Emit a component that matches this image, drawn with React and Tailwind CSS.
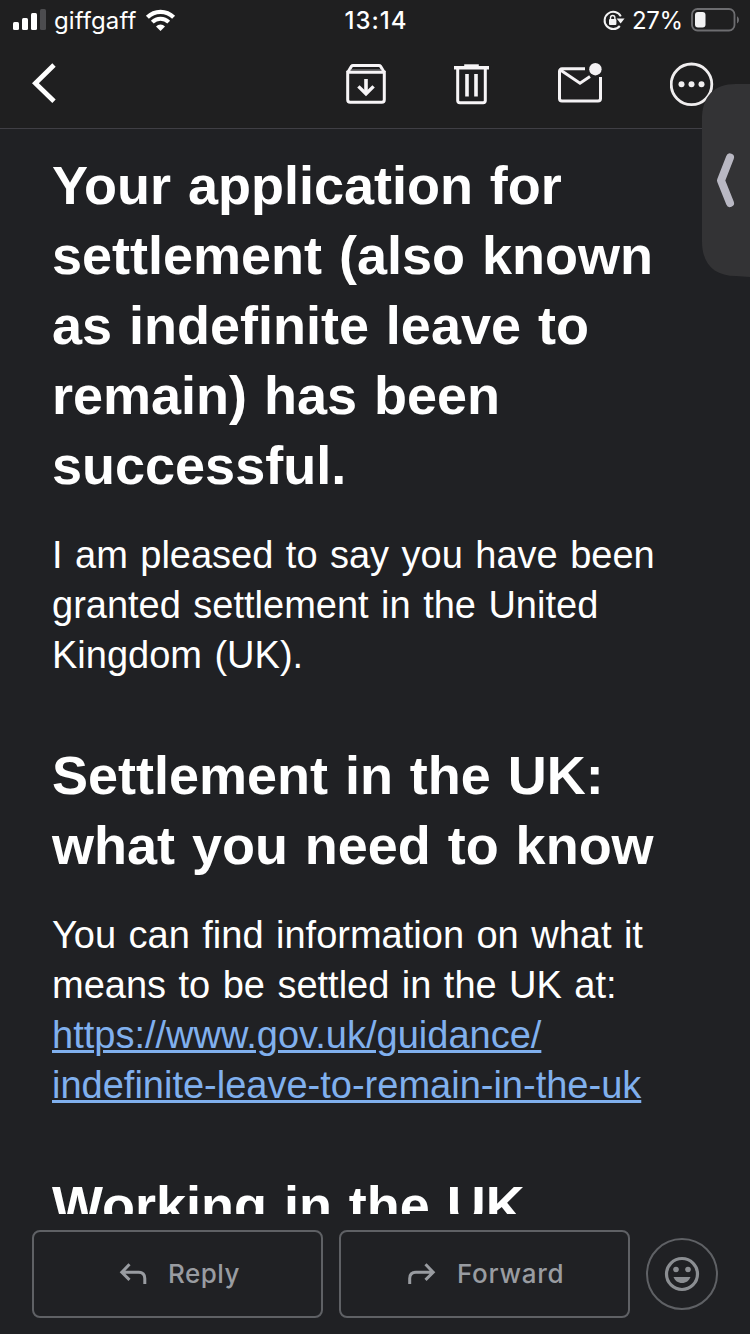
import React from 'react';

const StatusBar = () => (
  <div className="flex h-10 shrink-0 items-center text-[24px] leading-10 text-white">
    <div className="flex flex-1 items-center pl-[13px]">
      <svg width="34" height="22" viewBox="0 0 34 22" fill="#fff">
        <rect x="0" y="13" width="6" height="8" rx="1.5" />
        <rect x="9" y="9" width="6" height="12" rx="1.5" />
        <rect x="18" y="4" width="6" height="17" rx="1.5" />
        <rect x="27" y="0" width="6" height="21" rx="1.5" fill="#4c4c4f" />
      </svg>
      <span className="ml-[7px] w-[82px] whitespace-nowrap pt-0.5 leading-[38px] tracking-[0.1px]">giffgaff</span>
      <svg className="ml-[9px]" width="31" height="23" viewBox="0 0 31 23">
        <path d="M2.4 8.2a18.6 18.6 0 0 1 26.2 0" fill="none" stroke="#fff" strokeWidth="4.2" />
        <path d="M7.3 13.2a11.6 11.6 0 0 1 16.4 0" fill="none" stroke="#fff" strokeWidth="4" />
        <path d="M11 17.4a6.5 6.5 0 0 1 9 0L15.5 22z" fill="#fff" />
      </svg>
    </div>
    <span className="w-[64px] whitespace-nowrap pt-0.5 leading-[38px] font-medium tracking-[1px]">13:14</span>
    <div className="flex flex-1 items-center justify-end pr-[10px]">
      <svg width="22" height="21" viewBox="0 0 22 21" fill="none">
        <path d="M17.8 6.4A8.6 8.6 0 1 0 16.8 16" stroke="#f4f4f5" strokeWidth="2" />
        <path d="M13.6 8.4h8L17.6 13.4z" fill="#f4f4f5" />
        <rect x="6" y="9" width="7.4" height="6" rx="1" fill="#f4f4f5" />
        <path d="M7.5 9.5V7.7a2.2 2.2 0 0 1 4.4 0v1.8" stroke="#f4f4f5" strokeWidth="1.4" />
      </svg>
      <span className="ml-[7px] w-[51px] whitespace-nowrap pt-0.5 leading-[38px] tracking-[-0.3px]">27%</span>
      <svg className="ml-[8px]" width="49" height="24" viewBox="0 0 49 24">
        <rect x="1" y="1" width="42.5" height="21.5" rx="5.5" fill="none" stroke="#6d6d70" strokeWidth="1.8" />
        <rect x="4" y="4" width="10.5" height="15.5" rx="3" fill="#f2f2f3" />
        <path d="M46 8.2c2.6 1.4 2.6 5.8 0 7.2z" fill="#6d6d70" />
      </svg>
    </div>
  </div>
);

const Toolbar = () => (
  <div className="flex h-[89px] shrink-0 items-center border-b border-[#403f45] pr-[36px] pl-[32px]">
    <svg width="24" height="40" viewBox="0 0 24 40" fill="none" className="-mt-[2px]">
      <path d="M22 2L3.4 20.2 22 38.2" stroke="#fff" strokeWidth="4.8" />
    </svg>
    <svg className="ml-auto" width="40" height="40" viewBox="0 0 40 40" fill="none" stroke="#f7f5f7">
      <path d="M1.7 8.2h36.6v27.6a2.5 2.5 0 0 1-2.5 2.5H4.2a2.5 2.5 0 0 1-2.5-2.5z" strokeWidth="3" />
      <path d="M1.7 8.5L5.5 2.2Q6 1.6 7 1.6h26q1 0 1.5.6l3.8 6.3" strokeWidth="3" />
      <path d="M4.5 6h31" strokeWidth="1" stroke="#8d8c8e" />
      <path d="M20 15v14" strokeWidth="3.6" />
      <path d="M12.4 22.4l7.6 7.4 7.6-7.4" strokeWidth="3.4" />
    </svg>
    <svg className="ml-[68px]" width="35" height="41" viewBox="0 0 35 41" fill="none" stroke="#f7f5f7">
      <path d="M0 3.8h35" strokeWidth="3.6" />
      <path d="M10.2 1.8h14.6" strokeWidth="3" />
      <path d="M3.7 4v32.6a2.2 2.2 0 0 0 2.2 2.2h23.2a2.2 2.2 0 0 0 2.2-2.2V4" strokeWidth="3" />
      <path d="M13 10v22.5M22 10v22.5" strokeWidth="3.6" />
    </svg>
    <svg className="ml-[69px] -mt-[3px]" width="44" height="41" viewBox="0 0 44 41" fill="none" stroke="#f4f2f4">
      <path d="M27 6.8H4a2.5 2.5 0 0 0-2.5 2.5v27.2A2.5 2.5 0 0 0 4 39h36a2.5 2.5 0 0 0 2.5-2.5V15" strokeWidth="3" />
      <path d="M2.8 8.2L22 21.2 32 14.6" strokeWidth="3" />
      <circle cx="37.4" cy="7.2" r="6.2" fill="#f4f2f4" stroke="none" />
    </svg>
    <svg className="ml-[68px]" width="44" height="44" viewBox="0 0 44 44" fill="none">
      <circle cx="21.5" cy="22.3" r="20.3" stroke="#f0eeef" strokeWidth="2.8" />
      <circle cx="11.5" cy="22.3" r="3" fill="#f0eeef" />
      <circle cx="21.5" cy="22.3" r="3" fill="#f0eeef" />
      <circle cx="31.5" cy="22.3" r="3" fill="#f0eeef" />
    </svg>
  </div>
);

const Message = () => (
  <div className="h-[1085px] shrink-0 overflow-hidden whitespace-nowrap pt-[21px] pl-[52px] text-white [word-spacing:1.9px]">
    <h1 className="text-[54px] leading-[70px] font-bold">
      Your application for<br />
      settlement (also known<br />
      as indefinite leave to<br />
      remain) has been<br />
      successful.
    </h1>
    <p className="mt-[30px] text-[38px] leading-[50px]">
      I am pleased to say you have been<br />
      granted settlement in the United<br />
      Kingdom (UK).
    </p>
    <h2 className="mt-[60px] text-[54px] leading-[70px] font-bold">
      Settlement in the UK:<br />
      what you need to know
    </h2>
    <p className="mt-[30px] text-[38px] leading-[50px]">
      You can find information on what it<br />
      means to be settled in the UK at:<br />
      <a className="text-[#80b0ee] underline decoration-[3px] underline-offset-[2px]">
        https://www.gov.uk/guidance/<br />
        indefinite-leave-to-remain-in-the-uk
      </a>
    </p>
    <h2 className="mt-[60px] text-[54px] leading-[70px] font-bold">Working in the UK</h2>
  </div>
);

const BottomActions = () => (
  <div className="flex grow items-center gap-4 px-8 pb-4 pt-4 font-['Inter',sans-serif] text-[26px] font-medium text-[#999ca1]">
    <button className="flex h-[88px] w-[291px] items-center rounded-lg border-2 border-[#5f6165] pl-[85px]">
      <svg width="30" height="24" viewBox="0 0 30 24" fill="none" stroke="#999ca1" strokeWidth="3">
        <path d="M10.5 2.2L2.8 10.3l7.7 7.6M3 10.3h16.5q6.3 0 6.3 6.3V22" />
      </svg>
      <span className="-mt-0.5 ml-[19px] tracking-[0.5px]">Reply</span>
    </button>
    <button className="flex h-[88px] w-[291px] items-center rounded-lg border-2 border-[#5f6165] pl-[66px]">
      <svg width="30" height="24" viewBox="0 0 30 24" fill="none" stroke="#999ca1" strokeWidth="3">
        <path d="M18.5 2.2l7.7 8.1-7.7 7.6M26 10.3H9q-6.3 0-6.3 6.3V22" />
      </svg>
      <span className="-mt-0.5 ml-[20px] tracking-[0.7px]">Forward</span>
    </button>
    <button className="flex h-[72px] w-[72px] items-center justify-center rounded-full border-2 border-[#5f6165]">
      <svg width="36" height="36" viewBox="0 0 36 36" fill="#8b8e92">
        <circle cx="18" cy="18" r="15.5" fill="none" stroke="#8b8e92" strokeWidth="3.2" />
        <circle cx="12" cy="13.5" r="2.8" />
        <circle cx="24" cy="13.5" r="2.8" />
        <path d="M9.5 21h17c-1.4 3.8-4.4 6-8.5 6s-7.1-2.2-8.5-6z" />
      </svg>
    </button>
  </div>
);

// Assistive drawer handle floating over the right edge
const EdgeHandle = () => (
  <div className="absolute top-[84px] right-0">
    <svg width="48" height="193" viewBox="0 0 48 193" fill="none">
      <path d="M48 0H34C12 0 0 12 0 36v121c0 23 12 35 34 35l14 1z" fill="#333335" />
      <path d="M28 73.5L19 96.5l9 22.5" stroke="#b9b8c3" strokeWidth="8" strokeLinecap="round" strokeLinejoin="round" />
    </svg>
  </div>
);

const App = () => {
  return (
    <div className="relative flex h-[1334px] w-[750px] flex-col overflow-hidden bg-[#202124] font-['Liberation_Sans',Arial,sans-serif]">
      <div className="bg-[#1f1f20] font-['Inter',sans-serif]">
        <StatusBar />
        <Toolbar />
      </div>
      <Message />
      <BottomActions />
      <EdgeHandle />
    </div>
  );
};

export default App;
